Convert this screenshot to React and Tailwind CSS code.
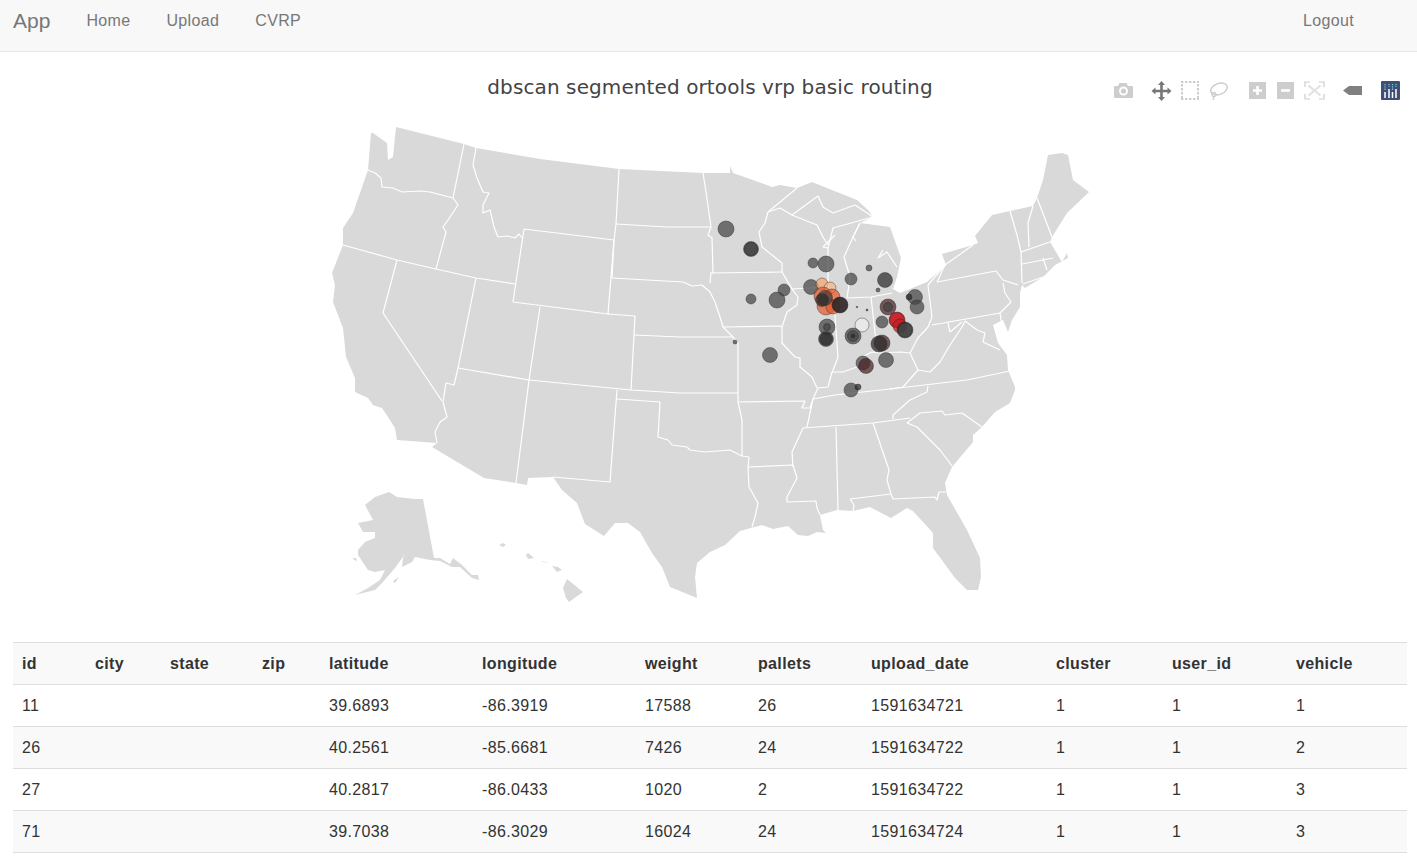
import React from 'react'

const rows = [
  [11, '', '', '', '39.6893', '-86.3919', 17588, 26, 1591634721, 1, 1, 1],
  [26, '', '', '', '40.2561', '-85.6681', 7426, 24, 1591634722, 1, 1, 2],
  [27, '', '', '', '40.2817', '-86.0433', 1020, 2, 1591634722, 1, 1, 3],
  [71, '', '', '', '39.7038', '-86.3029', 16024, 24, 1591634724, 1, 1, 3],
]

const columns = [
  { name: 'id', cls: 'w-[73px]' },
  { name: 'city', cls: 'w-[75px]' },
  { name: 'state', cls: 'w-[92px]' },
  { name: 'zip', cls: 'w-[67px]' },
  { name: 'latitude', cls: 'w-[153px]' },
  { name: 'longitude', cls: 'w-[163px]' },
  { name: 'weight', cls: 'w-[113px]' },
  { name: 'pallets', cls: 'w-[113px]' },
  { name: 'upload_date', cls: 'w-[185px]' },
  { name: 'cluster', cls: 'w-[116px]' },
  { name: 'user_id', cls: 'w-[124px]' },
  { name: 'vehicle', cls: 'w-[120px]' },
]

// outline of the lower 48, page coordinates
const LAND =
  'M396 127 L464 144 L476 148 L540 159 L619 169 L703 173 L730 173 L730 166 L733 173 L750 179 L772 187 L780 185 L797 188 L812 182 L857 200 L868 210 L873 217 L860 223 L890 227 L901 258 L897 277 L893 289 L900 293 L927 282 L946 265 L942 254 L973 245 L978 243 L975 236 L992 215 L1010 211 L1033 206 L1037 198 L1043 180 L1048 155 L1062 153 L1068 155 L1073 180 L1089 192 L1067 213 L1052 237 L1050 242 L1062 262 L1067 253 L1068 258 L1055 265 L1043 277 L1025 288 L1022 285 L1020 293 L1020 307 L1012 320 L1008 332 L1003 320 L993 325 L998 343 L1007 355 L1008 370 L1015 387 L1015 390 L1010 403 L995 412 L982 427 L973 435 L973 442 L952 467 L945 483 L947 495 L967 530 L980 558 L981 577 L978 590 L967 590 L955 578 L933 548 L933 533 L913 511 L907 508 L891 518 L870 507 L853 511 L837 510 L820 515 L823 530 L826 533 L817 532 L808 536 L798 535 L788 526 L773 529 L762 525 L740 531 L725 545 L710 552 L697 563 L695 577 L697 598 L670 587 L662 567 L652 553 L640 532 L628 523 L615 523 L604 536 L585 524 L577 503 L562 490 L553 477 L528 478 L527 485 L516 483 L484 478 L432 447 L437 443 L397 440 L395 428 L388 417 L382 408 L373 405 L368 398 L355 392 L355 378 L346 357 L343 328 L333 302 L335 285 L332 273 L343 245 L343 228 L353 213 L368 170 L371 133 L373 133 L387 143 L388 160 L393 157 Z'

const ALASKA =
  'M423 499 L434 558 L440 558 L450 564 L453 558 L462 565 L472 575 L478 575 L479 580 L472 578 L460 567 L452 567 L440 561 L430 560 L415 557 L412 562 L402 567 L403 558 L405 554 L395 568 L382 583 L375 590 L355 595 L368 588 L380 580 L385 570 L375 572 L368 570 L358 555 L358 550 L365 542 L375 538 L375 532 L363 532 L358 523 L373 520 L365 505 L375 497 L389 492 L397 497 L415 499 Z'

const ISLANDS = [
  'M393 581 L399 577 L397 580 L395 583 Z',
  'M353 558 L356 558 L357 561 L354 560 Z',
  'M499 545 L503 543 L506 545 L503 547 Z',
  'M526 555 L528 553 L534 558 L528 559 Z',
  'M542 561 L550 563 L543 562 Z',
  'M552 566 L558 567 L562 570 L557 572 Z',
  'M567 579 L583 592 L569 602 L566 598 L563 588 Z',
]

// state lines, white strokes over the land
const BORDERS = [
  'M368 170 L375 173 L381 178 L382 187 L393 188 L402 192 L420 191 L430 192 L453 198',
  'M464 144 L453 198 L458 205 L448 220 L443 227 L446 232 L436 269',
  'M476 148 L473 165 L477 178 L483 192 L489 193 L483 205 L483 213 L490 210 L494 227 L498 237 L507 236 L515 238 L519 234 L522 238',
  'M343 245 L397 260 L436 269 L476 278 L515 284',
  'M524 229 L614 240 L608 314 L513 302 Z',
  'M619 169 L616 224 L614 240 L612 278',
  'M616 224 L667 227 L711 227',
  'M703 173 L706 192 L711 227 L708 235 L712 238 L713 273',
  'M612 278 L683 282 L692 286 L702 285 L710 292 L715 302 L720 317 L723 327 L733 337 L738 343 L738 402 L742 420 L742 456 L749 457',
  'M711 273 L710 283',
  'M608 314 L635 316 L634 335 L631 390',
  'M634 335 L680 337 L733 337',
  'M397 260 L383 313 L442 401',
  'M476 278 L458 368 L454 385 L446 383 L443 402 L447 417 L440 422 L435 432 L437 443',
  'M458 368 L529 380 L631 390 L680 393 L738 393',
  'M540 307 L529 380 L516 483',
  'M617 390 L610 482 L553 477',
  'M617 399 L660 402 L658 437 L668 440 L672 445 L687 447 L690 450 L705 452 L730 450 L742 456',
  'M749 457 L748 467 L749 487 L758 503 L755 517 L752 527',
  'M738 402 L805 401 L802 408 L810 408 L813 399 L807 427',
  'M748 467 L793 465 L797 478 L787 497 L787 502 L816 501 L817 508 L820 515',
  'M803 428 L792 452 L793 467',
  'M803 428 L873 423 L910 418',
  'M836 427 L838 510',
  'M873 423 L889 470 L887 480 L891 494 L893 499 L935 497 L937 500 L939 492 L946 492',
  'M850 499 L891 494',
  'M850 499 L854 505 L853 511',
  'M907 423 L917 427 L940 450 L952 466',
  'M907 423 L920 413 L942 411 L945 415 L962 413 L982 427',
  'M893 419 L893 415 L910 400 L927 392 L928 386',
  'M813 399 L835 395 L890 389 L967 380 L1010 371',
  'M813 399 L818 388 L828 387 L832 372 L843 372 L857 367 L860 358 L872 352 L880 353 L900 352 L910 353 L918 370 L930 372 L940 362 L950 345 L962 327 L965 321 L977 330 L985 333 L983 342 L1000 350',
  'M918 370 L903 387 L890 389',
  'M910 353 L918 338 L928 327 L932 317 L928 285',
  'M932 325 L1000 313',
  'M937 282 L996 271 L1003 280 L1018 285',
  'M1003 283 L1005 293 L1011 302 L1000 313 L1003 333 L1013 334',
  'M948 323 L950 332 L962 322',
  'M871 297 L877 350',
  'M847 298 L871 297 L892 293',
  'M835 317 L838 357 L832 373',
  'M835 317 L835 300 L828 287 L792 289 L798 297 L797 305 L787 312 L782 327 L782 343 L795 357 L800 358 L800 367 L812 377 L817 388',
  'M710 273 L782 272',
  'M723 327 L780 326 L782 327',
  'M768 212 L765 223 L759 232 L762 247 L782 263 L782 272 L792 289',
  'M768 212 L780 208 L792 215 L817 225 L823 237 L828 245',
  'M768 212 L797 188',
  'M792 215 L818 196 L823 207 L833 213 L855 205 L873 217',
  'M873 217 L833 228 L828 248 L828 287',
  'M835 235 L823 247 L828 248',
  'M860 223 L853 237 L844 257 L850 277 L847 298',
  'M860 223 L853 237 L856 241',
  'M883 250 L878 258 L887 252 L897 267',
  'M937 282 L945 265 L973 245',
  'M928 285 L945 265',
  'M1010 211 L1017 235 L1021 252 L1022 283',
  'M1033 206 L1028 223 L1029 247',
  'M1037 198 L1052 237',
  'M1021 252 L1050 242',
  'M1022 264 L1053 258',
  'M1043 258 L1047 270',
  'M1023 284 L1043 277',
]

const GRAY = '#444444'
const DARK = '#2a2a2a'
const RED = '#c81a20'
const MAROON = '#4a2226'
const ORANGE = '#e2592c'

const markers = [
  [726, 229, 8, GRAY], [751, 249, 7.5, DARK], [751, 249, 6.5, GRAY],
  [813, 263, 5, GRAY], [826, 264, 8, GRAY], [869, 268, 3, GRAY],
  [885, 280, 7.5, DARK], [851, 279, 6, GRAY], [878, 290, 2, GRAY],
  [784, 290, 6, GRAY], [751, 299, 5, GRAY], [777, 300, 8, GRAY],
  [811, 287, 7.5, GRAY], [915, 297, 7.5, GRAY], [909, 297, 3, DARK],
  [917, 307, 7, GRAY], [888, 307, 8, MAROON], [888, 307, 4.5, GRAY],
  [882, 322, 6, GRAY], [897, 320, 8, RED], [897, 320, 7.5, RED], [900, 326, 7, RED], [905, 330, 8, DARK], [905, 330, 7, GRAY],
  [862, 325, 7, '#ffffff'], [853, 336, 8, GRAY], [853, 336, 5.5, GRAY], [853, 336, 2, DARK],
  [827, 327, 8, GRAY], [827, 327, 3.5, GRAY], [826, 339, 7.5, GRAY], [826, 339, 6.5, DARK],
  [770, 355, 7.5, GRAY], [735, 342, 2, GRAY], [882, 343, 8, MAROON], [879, 344, 8, DARK],
  [886, 360, 7.5, GRAY], [863, 363, 7, GRAY], [866, 366, 7.5, MAROON],
  [851, 390, 7, GRAY], [858, 387, 3, DARK], [857, 307, 0.8, DARK], [867, 310, 1, DARK],
  [822, 284, 6, '#f4a36e'], [830, 288, 6, '#f4b58c'], [823, 296, 9, ORANGE], [832, 297, 8, ORANGE],
  [826, 306, 9, ORANGE], [833, 307, 7, ORANGE], [825, 298, 7.5, GRAY],
  [822, 300, 6.5, DARK], [840, 305, 8, MAROON], [840, 305, 7.5, DARK],
]

function ModeBar() {
  return (
    <svg className='absolute left-[1105px] top-[24px]' width='305' height='34' viewBox='1105 76 305 34'>
      {/* camera */}
      <path d='M1114 86 h4 l1.5 -3 h7 l1.5 3 h4 a1 1 0 0 1 1 1 v10 a1 1 0 0 1 -1 1 h-17 a1 1 0 0 1 -1 -1 v-10 a1 1 0 0 1 1 -1 z' fill='#cdcdcd' />
      <circle cx='1123.5' cy='91' r='4.5' fill='#ffffff' />
      <circle cx='1123.5' cy='91' r='2.6' fill='#cdcdcd' />
      {/* pan */}
      <path d='M1161.5 81 l3.5 4 h-2.2 v4.7 h4.7 v-2.2 l4 3.5 -4 3.5 v-2.2 h-4.7 v4.7 h2.2 l-3.5 4 -3.5 -4 h2.2 v-4.7 h-4.7 v2.2 l-4 -3.5 4 -3.5 v2.2 h4.7 v-4.7 h-2.2 z' fill='#777777' />
      {/* box select */}
      <path d='M1181 82 H1199 M1181 99 H1199 M1182 84 V98 M1198 84 V98' fill='none' stroke='#cdcdcd' strokeWidth='2' strokeDasharray='2.4 1.6' />
      {/* lasso */}
      <ellipse cx='1219' cy='89' rx='8.5' ry='5.5' transform='rotate(-20 1219 89)' fill='none' stroke='#cdcdcd' strokeWidth='1.5' />
      <circle cx='1214' cy='94.5' r='2' fill='none' stroke='#cdcdcd' strokeWidth='1.3' />
      <path d='M1214 96.5 L1213 100' stroke='#cdcdcd' strokeWidth='1.3' />
      {/* zoom in */}
      <rect x='1249' y='82' width='17' height='17' fill='#cdcdcd' />
      <path d='M1257.5 86 v9 M1253 90.5 h9' stroke='#ffffff' strokeWidth='2.6' />
      {/* zoom out */}
      <rect x='1277' y='82' width='17' height='17' fill='#cdcdcd' />
      <path d='M1281 90.5 h9' stroke='#ffffff' strokeWidth='2.6' />
      {/* autoscale */}
      <path d='M1305 87 v-5 h5 M1319 82 h5 v5 M1324 94 v5 h-5 M1310 99 h-5 v-5' fill='none' stroke='#cdcdcd' strokeWidth='1.2' />
      <path d='M1308.5 85.5 L1320.5 95.5 M1320.5 85.5 L1308.5 95.5' stroke='#e2e2e2' strokeWidth='2.2' />
      {/* hover closest */}
      <path d='M1343 90.5 L1349 86 H1362 V95 H1349 Z' fill='#808080' />
      {/* plotly logo */}
      <rect x='1381' y='81' width='19' height='19' rx='1' fill='#3f4f75' />
      <path d='M1385 92 v6 M1389 89 v9 M1392.5 92 v6 M1396 89 v9' stroke='#ffffff' strokeWidth='1.5' />
      <path d='M1385 84 v6 M1389 84 v3 M1392.5 84 v6 M1396 84 v3' stroke='#7fcfd8' strokeWidth='1.2' strokeDasharray='1.3 1' />
    </svg>
  )
}

export default function App() {
  return (
    <div className="font-['Liberation_Sans',Arial,sans-serif] text-[16px] tracking-[0.35px] text-[#333333] bg-white">
      {/* navbar */}
      <nav className='h-[52px] bg-[#f8f8f8] border-b border-[#e7e7e7] flex items-start text-[#777777] leading-[22px]'>
        <span className='ml-[13px] mt-[9px] text-[21px] leading-[24px] tracking-normal'>App</span>
        <a className='ml-[36px] mt-[10px]'>Home</a>
        <a className='ml-[36px] mt-[10px]'>Upload</a>
        <a className='ml-[36px] mt-[10px]'>CVRP</a>
        <a className='ml-auto mr-[63px] mt-[10px]'>Logout</a>
      </nav>

      {/* plot */}
      <div className='relative h-[590px]'>
        <div className="absolute left-0 right-0 top-[22px] text-center pl-[3px] font-['DejaVu_Sans',Verdana,sans-serif] text-[20px] tracking-[0.1px] leading-[26px] text-[#444444]">
          dbscan segmented ortools vrp basic routing
        </div>
        <ModeBar />
        <svg className='absolute left-0 top-0' width='1417' height='590' viewBox='0 52 1417 590'>
          <path d={LAND} fill='#d9d9d9' />
          <path d={ALASKA} fill='#d9d9d9' />
          {ISLANDS.map((d, i) => <path key={i} d={d} fill='#d9d9d9' />)}
          {BORDERS.map((d, i) => (
            <path key={i} d={d} fill='none' stroke='#ffffff' strokeWidth='1.2' strokeLinejoin='round' />
          ))}
          {markers.map(([cx, cy, r, color], i) => (
            <circle key={i} cx={cx} cy={cy} r={r} fill={color} fillOpacity={color === '#ffffff' ? 0.4 : 0.72} stroke='#222222' strokeOpacity='0.5' strokeWidth='0.8' />
          ))}
        </svg>
      </div>

      {/* table */}
      <div className='px-[13px]'>
        <table className='w-[1394px] table-fixed border-collapse'>
          <thead>
            <tr className='h-[42px] bg-[#f9f9f9] border-t border-[#dddddd]'>
              {columns.map((col) => (
                <th key={col.name} className={`${col.cls} px-[9px] py-0 text-left font-bold`}>{col.name}</th>
              ))}
            </tr>
          </thead>
          <tbody>
            {rows.map((row, i) => (
              <tr key={row[0]} className={i % 2 === 1 ? 'h-[42px] bg-[#f9f9f9] border-t border-[#dddddd]' : 'h-[42px] bg-white border-t border-[#dddddd]'}>
                {row.map((cell, j) => (
                  <td key={j} className='px-[9px] py-0'>{cell}</td>
                ))}
              </tr>
            ))}
            <tr className='h-0 border-t border-[#dddddd]' />
          </tbody>
        </table>
      </div>
    </div>
  )
}
